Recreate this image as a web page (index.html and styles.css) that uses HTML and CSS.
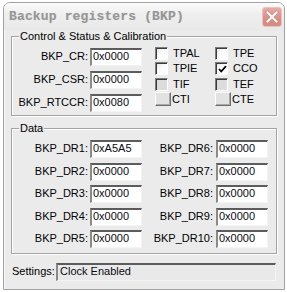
FILE: index.html
```html
<!DOCTYPE html>
<html>
<head>
<meta charset="utf-8">
<link rel="stylesheet" href="styles.css">
</head>
<body>
<div class="window">
  <div class="titlebar">
    <span class="title">Backup registers (BKP)</span>
    <span class="close">
      <svg width="20" height="20" viewBox="0 0 20 20">
        <path d="M5.5 5.5 L14.5 14.5 M14.5 5.5 L5.5 14.5" stroke="#c98c84" stroke-width="3.6" stroke-linecap="square"/>
        <path d="M5.5 5.5 L14.5 14.5 M14.5 5.5 L5.5 14.5" stroke="#ffffff" stroke-width="2" stroke-linecap="square"/>
      </svg>
    </span>
  </div>
  <div class="content">
    <fieldset class="group g1">
      <legend>Control &amp; Status &amp; Calibration</legend>
      <div class="g1-inner">
        <div class="regs">
          <div class="row"><span class="lbl w1">BKP_CR:</span><span class="edit">0x0000</span></div>
          <div class="row"><span class="lbl w1">BKP_CSR:</span><span class="edit">0x0000</span></div>
          <div class="row"><span class="lbl w1">BKP_RTCCR:</span><span class="edit">0x0080</span></div>
        </div>
        <div class="flags">
          <div class="flag"><span class="box"></span><span>TPAL</span></div>
          <div class="flag"><span class="box"></span><span>TPE</span></div>
          <div class="flag"><span class="box"></span><span>TPIE</span></div>
          <div class="flag"><span class="box"><svg width="9" height="9" viewBox="0 0 9 9"><path d="M1 4 L3.2 6.5 L8 1.2" fill="none" stroke="#000" stroke-width="1.8"/></svg></span><span>CCO</span></div>
          <div class="flag"><span class="box dis"></span><span>TIF</span></div>
          <div class="flag"><span class="box dis"></span><span>TEF</span></div>
          <div class="flag btnflag"><span class="btn"></span><span>CTI</span></div>
          <div class="flag btnflag"><span class="btn"></span><span>CTE</span></div>
        </div>
      </div>
    </fieldset>
    <fieldset class="group g2">
      <legend>Data</legend>
      <div class="data">
        <div class="row"><span class="lbl w1">BKP_DR1:</span><span class="edit">0xA5A5</span><span class="lbl w2">BKP_DR6:</span><span class="edit e2">0x0000</span></div>
        <div class="row"><span class="lbl w1">BKP_DR2:</span><span class="edit">0x0000</span><span class="lbl w2">BKP_DR7:</span><span class="edit e2">0x0000</span></div>
        <div class="row"><span class="lbl w1">BKP_DR3:</span><span class="edit">0x0000</span><span class="lbl w2">BKP_DR8:</span><span class="edit e2">0x0000</span></div>
        <div class="row"><span class="lbl w1">BKP_DR4:</span><span class="edit">0x0000</span><span class="lbl w2">BKP_DR9:</span><span class="edit e2">0x0000</span></div>
        <div class="row"><span class="lbl w1">BKP_DR5:</span><span class="edit">0x0000</span><span class="lbl w2">BKP_DR10:</span><span class="edit e2">0x0000</span></div>
      </div>
    </fieldset>
    <div class="settings">
      <span class="slbl">Settings:</span>
      <span class="edit ro">Clock Enabled</span>
    </div>
  </div>
</div>
</body>
</html>
```

FILE: styles.css
```css
html, body {
  margin: 0;
  padding: 0;
  background: #ffffff;
}
body {
  font-family: "Liberation Sans", Arial, sans-serif;
  font-size: 11px;
  color: #000;
}
.window {
  margin: 2px 0 0 3px;
  width: 282px;
  height: 288px;
  box-sizing: border-box;
  border: 1px solid #a2a2a2;
  border-radius: 7px 7px 0 0;
  background: #ebebeb;
  display: flex;
  flex-direction: column;
  overflow: hidden;
  box-shadow: inset 1px 0 0 #f8f8f8;
}
.titlebar {
  height: 27px;
  flex: none;
  display: flex;
  align-items: center;
  justify-content: space-between;
  padding: 0 2px 0 5px;
  background: linear-gradient(#fbfbfb, #efefef 40%, #e9e9e9);
}
.title {
  font-family: "Liberation Mono", "Courier New", monospace;
  font-weight: bold;
  font-size: 13px;
  letter-spacing: 0.15px;
  color: #969696;
  text-shadow: 0 0 1px #d0d0d0;
}
.close {
  width: 20px;
  height: 20px;
  box-sizing: border-box;
  border-radius: 3px;
  border: 1px solid #e8c2bc;
  background: linear-gradient(#e7aba3, #d98f85 60%, #d78a80);
  display: flex;
  align-items: center;
  justify-content: center;
}
.close svg {
  display: block;
  margin: -1px;
}
.content {
  padding: 0 7px;
  display: flex;
  flex-direction: column;
}
.group {
  margin: 0;
  padding: 0;
  border: 1px solid #a4a4a4;
  box-shadow: inset 1px 1px 0 #ffffff, 1px 1px 0 #ffffff;
  min-inline-size: 0;
  box-sizing: border-box;
}
.group legend {
  margin-left: 7px;
  padding: 0 1px;
  line-height: 13px;
  background: #ebebeb;
}
.g1 {
  height: 86px;
  padding-top: 4px;
}
.g1-inner {
  display: flex;
  align-items: flex-start;
}
.regs {
  margin-top: 1px;
  display: flex;
  flex-direction: column;
  gap: 5px;
}
.row {
  display: flex;
  align-items: baseline;
  height: 18px;
}
.lbl {
  text-align: right;
  line-height: 13px;
}
.w1 { width: 76px; }
.w2 { width: 71px; }
.edit {
  display: block;
  box-sizing: border-box;
  width: 52px;
  height: 18px;
  margin-left: 2px;
  padding: 0 0 0 1px;
  line-height: 13px;
  background: #ffffff;
  border-style: solid;
  border-width: 2px 1px 1px 2px;
  border-color: #5c5c5c #f4f4f4 #f4f4f4 #8a8a8a;
  color: #0a0a14;
  white-space: nowrap;
  overflow: hidden;
}
.e2 { margin-left: 3px; }
.flags {
  margin-left: 13px;
  display: grid;
  grid-template-columns: 60px 60px;
  grid-auto-rows: 13px;
  row-gap: 2.33px;
}
.flag {
  display: flex;
  align-items: center;
  gap: 5px;
  line-height: 13px;
}
.box {
  width: 13px;
  height: 13px;
  box-sizing: border-box;
  flex: none;
  background: linear-gradient(135deg, #e4e4e4, #fbfbfb 45%, #ffffff);
  border-style: solid;
  border-width: 1px;
  border-color: #7c7c7c #ffffff #ffffff #7c7c7c;
  box-shadow: inset 1px 1px 0 #3c3c3c;
  display: flex;
  align-items: center;
  justify-content: center;
}
.box svg { display: block; margin: 1px 0 0 1px; }
.box.dis {
  background: #dcdcdc;
}
.btnflag { gap: 1px; }
.btn {
  width: 16px;
  height: 14px;
  box-sizing: border-box;
  flex: none;
  background: #e2e2e2;
  border-style: solid;
  border-width: 1px;
  border-color: #ffffff #6e6e6e #6e6e6e #ffffff;
  box-shadow: inset -1px -1px 0 #a8a8a8;
}
.g2 {
  margin-top: 6px;
  height: 132px;
  padding-top: 5px;
}
.data {
  display: flex;
  flex-direction: column;
  gap: 4.5px;
}
.settings {
  margin-top: 9px;
  display: flex;
  align-items: baseline;
}
.slbl {
  padding-left: 1px;
  width: 44px;
  line-height: 13px;
}
.edit.ro {
  flex: 1;
  width: auto;
  margin-left: 0;
  margin-right: 1px;
  background: #e9e9e9;
  padding-left: 2px;
}
```
